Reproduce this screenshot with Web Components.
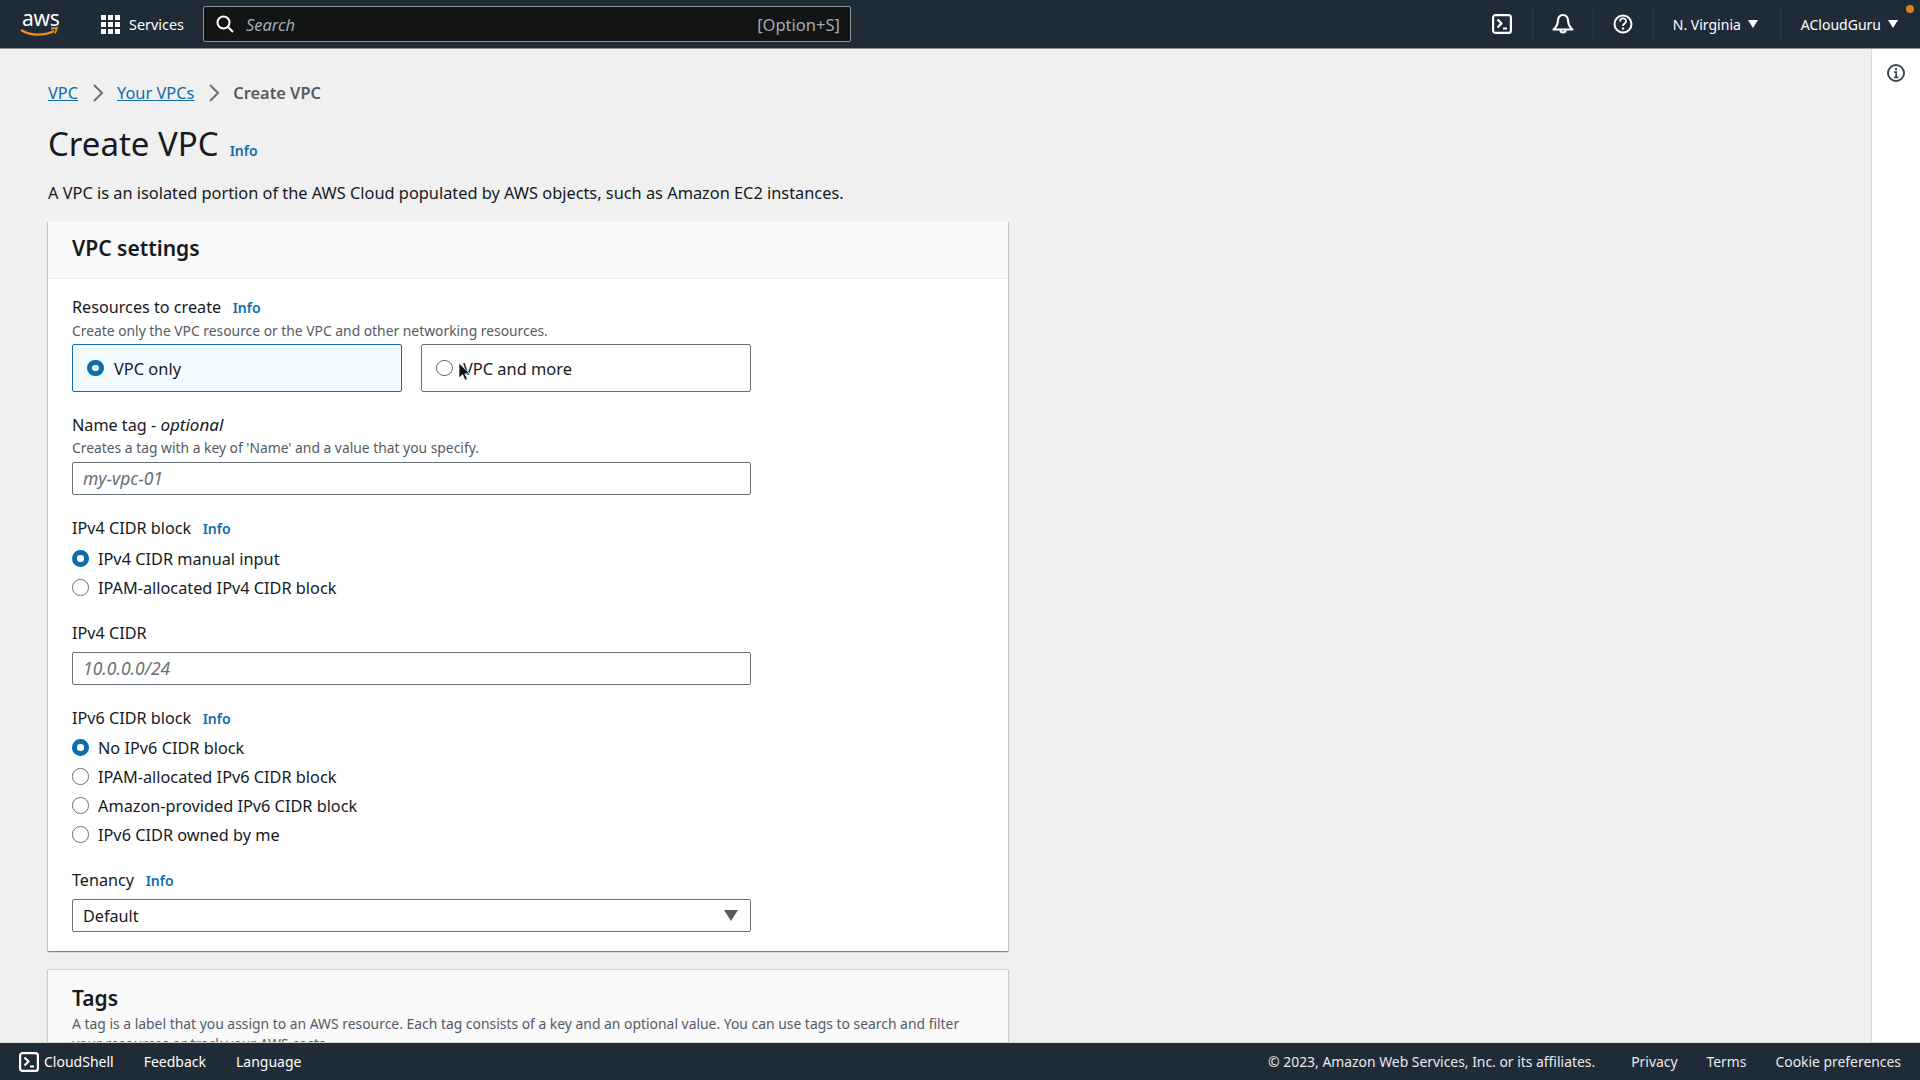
<!DOCTYPE html>
<html lang="en">
<head>
<meta charset="utf-8">
<title>Create VPC</title>
<style>
html, body { margin: 0; height: 100%; overflow: hidden; }
body { font-family: "Noto Sans", "Open Sans", sans-serif; color: #16191f; background: #eff0ef; }
</style>
</head>
<body>
<app-shell>
  <top-bar slot="top"></top-bar>
  <bread-crumbs>
    <a>VPC</a><a>Your VPCs</a><span>Create VPC</span>
  </bread-crumbs>
  <page-title>Create VPC</page-title>
  <form-card heading="VPC settings">
    <form-field label="Resources to create" info description="Create only the VPC resource or the VPC and other networking resources." gap="0" mb="22">
      <div style="display:flex;gap:19px">
        <radio-tile checked>VPC only</radio-tile>
        <radio-tile>VPC and more</radio-tile>
      </div>
    </form-field>
    <form-field label="Name tag" optional description="Creates a tag with a key of 'Name' and a value that you specify." gap="4" mb="22">
      <text-box placeholder="my-vpc-01"></text-box>
    </form-field>
    <form-field label="IPv4 CIDR block" info gap="4" mb="20">
      <radio-option checked>IPv4 CIDR manual input</radio-option>
      <radio-option>IPAM-allocated IPv4 CIDR block</radio-option>
    </form-field>
    <form-field label="IPv4 CIDR" gap="8" mb="22">
      <text-box placeholder="10.0.0.0/24"></text-box>
    </form-field>
    <form-field label="IPv6 CIDR block" info gap="3" mb="20">
      <radio-option checked>No IPv6 CIDR block</radio-option>
      <radio-option>IPAM-allocated IPv6 CIDR block</radio-option>
      <radio-option>Amazon-provided IPv6 CIDR block</radio-option>
      <radio-option>IPv6 CIDR owned by me</radio-option>
    </form-field>
    <form-field label="Tenancy" info gap="7" mb="0">
      <select-box>Default</select-box>
    </form-field>
  </form-card>
  <tags-card></tags-card>
  <bottom-bar slot="bottom"></bottom-bar>
</app-shell>

<script>
const ICON_SHELL = `<svg width="20" height="20" viewBox="0 0 20 20" fill="none" stroke="#fff" stroke-width="2.200"><rect x="1.100" y="1.100" width="17.800" height="17.800" rx="2.500"/><path d="M5.500 5.500l4 4-4 4M11 14.500h4" stroke-linejoin="round"/></svg>`;

class AppShell extends HTMLElement {
  constructor() {
    super();
    this.attachShadow({mode: "open"}).innerHTML = `
    <style>
      :host { display: flex; flex-direction: column; height: 100vh; }
      .middle { flex: 1; display: flex; min-height: 0; }
      .content { flex: 1; min-width: 0; overflow: hidden; padding: 32px 0 0 48px; box-sizing: border-box; }
      .side { width: 48px; background: #fff; border-left: 1px solid #d5dbdb; display: flex; justify-content: center; padding-top: 14px; box-sizing: content-box; }
      .cursor { position: absolute; left: 458px; top: 362px; }
    </style>
    <slot name="top"></slot>
    <div class="middle">
      <div class="content"><slot></slot></div>
      <div class="side">
        <svg width="20" height="20" viewBox="0 0 20 20" fill="none" stroke="#414750" stroke-width="2"><circle cx="10" cy="10" r="8"/><circle cx="10" cy="6" r="1.200" fill="#414750" stroke="none"/><path d="M8 9.200h2.200v5M8 14.400h4.400" stroke-width="1.700"/></svg>
      </div>
    </div>
    <slot name="bottom"></slot>
    <svg class="cursor" width="12" height="20" viewBox="0 0 12 20"><path d="M1 1v15l3.600-3.400 2.400 5.600 2.400-1-2.400-5.400h4.600z" fill="#111" stroke="#fff" stroke-width=".7"/></svg>`;
  }
}

class TopBar extends HTMLElement {
  constructor() {
    super();
    const grid = Array.from({length: 9}, () => `<i></i>`).join("");
    this.attachShadow({mode: "open"}).innerHTML = `
    <style>
      :host { display: flex; align-items: center; height: 48px; background: #202b38; border-bottom: 1px solid #8c939b; box-sizing: content-box; color: #fff; font-size: 14px; flex: none; }
      .logo { width: 40px; margin-left: 20px; position: relative; height: 34px; }
      .logo b { font-weight: 400; font-size: 21px; letter-spacing: -.3px; position: absolute; left: 2px; top: -3px; line-height: 28px; }
      .logo svg { position: absolute; left: 0; top: 20px; }
      .grid { display: grid; grid-template-columns: repeat(3, 5px); gap: 2px; margin-left: 41px; }
      .grid i { width: 5px; height: 5px; background: #fff; display: block; }
      .services { margin-left: 9px; font-size: 14.400px; }
      .search { margin-left: 19px; width: 648px; height: 36px; box-sizing: border-box; background: #121415; border: 1px solid #879596; border-radius: 2px; display: flex; align-items: center; padding: 0 10px; color: #a4abb3; font-size: 16.500px; }
      .search svg { margin-right: 12px; margin-left: 2px; }
      .search em { flex: 1; font-style: italic; }
      .right { margin-left: auto; display: flex; align-items: center; height: 100%; }
      .ico { width: 60px; display: flex; justify-content: center; align-items: center; height: 34px; border-right: 1px solid #2c3948; }
      .menu { display: flex; align-items: center; gap: 7px; font-size: 14px; height: 34px; }
      .tri { width: 0; height: 0; border-left: 5.500px solid transparent; border-right: 5.500px solid transparent; border-top: 8px solid #fff; }
      .dot { position: absolute; left: 1906px; top: 5px; width: 8px; height: 8px; border-radius: 50%; background: #e07f14; }
    </style>
    <div class="logo"><b>aws</b>
      <svg width="40" height="12" viewBox="0 0 40 12" fill="none"><path d="M1 3c9 6 23 6 33 1" stroke="#f08c1a" stroke-width="2.200"/><path d="M31 1.500l6-.5-2 5.500" stroke="#f08c1a" stroke-width="1.800"/></svg>
    </div>
    <div class="grid">${grid}</div>
    <span class="services">Services</span>
    <div class="search">
      <svg width="18" height="18" viewBox="0 0 18 18" fill="none" stroke="#fff" stroke-width="2"><circle cx="7.500" cy="7.500" r="6"/><path d="M12 12l5 5"/></svg>
      <em>Search</em><span>[Option+S]</span>
    </div>
    <div class="right">
      <div class="ico">${ICON_SHELL}</div>
      <div class="ico">
        <svg width="22" height="22" viewBox="0 0 22 22" fill="none" stroke="#fff" stroke-width="2.200" stroke-linejoin="round"><path d="M1.500 16.500c3-2.500 4-4.500 4.300-8C6 4.500 8 2 11 2s5 2.500 5.200 6.500c.3 3.500 1.300 5.500 4.300 8z"/><path d="M8.500 17a2.500 2.500 0 0 0 5 0"/></svg>
      </div>
      <div class="ico" style="width:59px">
        <svg width="20" height="20" viewBox="0 0 20 20" fill="none" stroke="#fff" stroke-width="2"><circle cx="10" cy="10" r="8.500"/><path d="M7 7.500c0-4 6-4 6-.3 0 2.300-3 2.300-3 4.800" stroke-width="1.800"/><circle cx="10" cy="14.500" r="1.200" fill="#fff" stroke="none"/></svg>
      </div>
      <div class="menu" style="padding:0 22px 0 19px;border-right:1px solid #2c3948">N. Virginia <span class="tri"></span></div>
      <div class="menu" style="padding:0 22px 0 20px">ACloudGuru <span class="tri"></span></div>
    </div>
    <div class="dot"></div>`;
  }
}

class BreadCrumbs extends HTMLElement {
  constructor() {
    super();
    this.attachShadow({mode: "open"}).innerHTML = `
    <style>
      :host { display: block; font-size: 16.350px; line-height: 24px; height: 24px; }
      .row { display: flex; align-items: center; gap: 13.500px; height: 24px; color: #545b64; font-weight: 600; }
      .row a { color: #0f6cad; text-decoration: underline; font-weight: 400; }
      .row svg { flex: none; }
    </style>
    <div class="row"></div>`;
    const row = this.shadowRoot.querySelector(".row");
    const sep = `<svg width="12" height="18" viewBox="0 0 12 18" fill="none" stroke="#687078" stroke-width="2"><path d="M2 1l8 8-8 8"/></svg>`;
    // copy the light children over, a separator between each
    row.innerHTML = Array.from(this.children).map(c =>
      c.tagName === "A" ? `<a>${c.textContent}</a>` : `<span>${c.textContent}</span>`
    ).join(sep);
  }
}

class PageTitle extends HTMLElement {
  constructor() {
    super();
    this.attachShadow({mode: "open"}).innerHTML = `
    <style>
      :host { display: block; }
      h1 { margin: 17px 0 0; font-size: 33px; font-weight: 400; line-height: 44px; display: flex; align-items: baseline; gap: 11px; color: #16191f; }
      h1 a { font-size: 14px; font-weight: 600; color: #0f6cad; }
      p { margin: 9px 0 17px; font-size: 16.350px; line-height: 22px; color: #16191f; }
    </style>
    <h1><slot></slot><a>Info</a></h1>
    <p>A VPC is an isolated portion of the AWS Cloud populated by AWS objects, such as Amazon EC2 instances.</p>`;
  }
}

class FormCard extends HTMLElement {
  constructor() {
    super();
    this.attachShadow({mode: "open"}).innerHTML = `
    <style>
      :host { display: block; width: 960px; background: #fff; box-shadow: 0 1px 1px 0 rgba(0,28,36,.3), 1px 1px 1px 0 rgba(0,28,36,.15), -1px 1px 1px 0 rgba(0,28,36,.15); margin-bottom: 19px; }
      h2 { margin: 0; background: #f8f9f8; height: 58px; box-sizing: border-box; padding: 13px 24px; font-size: 21px; line-height: 28px; font-weight: 600; border-bottom: 1px solid #eaeded; }
      .body { padding: 17px 24px 19px; }
    </style>
    <h2>${this.getAttribute("heading")}</h2>
    <div class="body"><slot></slot></div>`;
  }
}

class FormField extends HTMLElement {
  constructor() {
    super();
    const info = this.hasAttribute("info") ? `<a>Info</a>` : "";
    const opt = this.hasAttribute("optional") ? ` - <i>optional</i>` : "";
    const d = this.getAttribute("description");
    this.attachShadow({mode: "open"}).innerHTML = `
    <style>
      :host { display: block; margin-bottom: ${this.getAttribute("mb")}px; }
      .label { font-size: 16.200px; line-height: 22px; color: #16191f; display: flex; gap: 11.500px; align-items: baseline; }
      .label i { font-size: 17px; }
      .label a { font-size: 14px; font-weight: 600; color: #0f6cad; }
      .desc { font-size: 13.850px; line-height: 20px; color: #545b64; margin-top: 2px; margin-bottom: 3px; }
      .ctl { margin-top: ${this.getAttribute("gap")}px; }
    </style>
    <div class="label"><span>${this.getAttribute("label")}${opt}</span>${info}</div>
    ${d ? `<div class="desc">${d}</div>` : ""}
    <div class="ctl"><slot></slot></div>`;
  }
}

const RADIO_CSS = `
  .dot { width: 14.500px; height: 14.500px; border-radius: 50%; border: 1.500px solid #687078; background: #fff; flex: none; box-sizing: content-box; }
  .dot.on { border: 5.500px solid #0f6cad; width: 6.500px; height: 6.500px; }
`;

class RadioTile extends HTMLElement {
  constructor() {
    super();
    const on = this.hasAttribute("checked");
    this.attachShadow({mode: "open"}).innerHTML = `
    <style>
      :host { display: block; }
      ${RADIO_CSS}
      .tile { width: 330px; height: 48px; box-sizing: border-box; display: flex; align-items: center; gap: 10.500px; padding: 0 14px; font-size: 16.400px; border-radius: 2px;
        border: 1px solid ${on ? "#0f6cad" : "#687078"}; background: ${on ? "#f1faff" : "#fff"}; }
    </style>
    <div class="tile"><span class="dot ${on ? "on" : ""}"></span><slot></slot></div>`;
  }
}

class RadioOption extends HTMLElement {
  constructor() {
    super();
    const on = this.hasAttribute("checked");
    this.attachShadow({mode: "open"}).innerHTML = `
    <style>
      :host { display: flex; align-items: center; gap: 9.500px; height: 29px; font-size: 16.300px; }
      ${RADIO_CSS}
    </style>
    <span class="dot ${on ? "on" : ""}"></span><slot></slot>`;
  }
}

class TextBox extends HTMLElement {
  constructor() {
    super();
    this.attachShadow({mode: "open"}).innerHTML = `
    <style>
      :host { display: block; width: 679px; height: 33px; box-sizing: border-box; border: 1px solid #687078; border-radius: 2px; background: #fff; padding: 0 10px; font-size: 17.500px; line-height: 31px; font-style: italic; color: #687078; }
    </style>
    ${this.getAttribute("placeholder")}`;
  }
}

class SelectBox extends HTMLElement {
  constructor() {
    super();
    this.attachShadow({mode: "open"}).innerHTML = `
    <style>
      :host { display: flex; align-items: center; justify-content: space-between; width: 679px; height: 33px; box-sizing: border-box; border: 1px solid #687078; border-radius: 2px; background: #fff; padding: 0 12px 0 10px; font-size: 16.200px; }
      i { width: 0; height: 0; border-left: 7px solid transparent; border-right: 7px solid transparent; border-top: 11px solid #545b64; }
    </style>
    <slot></slot><i></i>`;
  }
}

class TagsCard extends HTMLElement {
  constructor() {
    super();
    this.attachShadow({mode: "open"}).innerHTML = `
    <style>
      :host { display: block; width: 960px; background: #f8f9f8; box-shadow: 0 -1px 1px 0 rgba(0,28,36,.08), 1px 0 1px 0 rgba(0,28,36,.15), -1px 0 1px 0 rgba(0,28,36,.15); padding: 13.500px 24px 20px; box-sizing: border-box; }
      h2 { margin: 0 0 2px; font-size: 21px; line-height: 28px; font-weight: 600; }
      p { margin: 0; font-size: 13.900px; line-height: 20px; color: #545b64; width: 900px; }
    </style>
    <h2>Tags</h2>
    <p>A tag is a label that you assign to an AWS resource. Each tag consists of a key and an optional value. You can use tags to search and filter your resources or track your AWS costs.</p>`;
  }
}

class BottomBar extends HTMLElement {
  constructor() {
    super();
    this.attachShadow({mode: "open"}).innerHTML = `
    <style>
      :host { display: flex; align-items: center; flex: none; height: 37px; background: #202b38; border-top: 1px solid #d5dbdb; box-sizing: content-box; color: #fff; font-size: 14px; padding: 0 19px; position: relative; }
      .cs { display: flex; align-items: center; gap: 5px; margin-right: 30px; }
      .lang { margin-left: 30px; }
      .r { margin-left: auto; display: flex; gap: 29px; color: #e8eaec; font-size: 13.900px; }
      .r span:first-child { margin-right: 7px; }
    </style>
    <div class="cs">${ICON_SHELL}<span>CloudShell</span></div>
    <span>Feedback</span><span class="lang">Language</span>
    <div class="r"><span>© 2023, Amazon Web Services, Inc. or its affiliates.</span><span>Privacy</span><span>Terms</span><span>Cookie preferences</span></div>`;
  }
}

customElements.define("app-shell", AppShell);
customElements.define("top-bar", TopBar);
customElements.define("bread-crumbs", BreadCrumbs);
customElements.define("page-title", PageTitle);
customElements.define("form-card", FormCard);
customElements.define("form-field", FormField);
customElements.define("radio-tile", RadioTile);
customElements.define("radio-option", RadioOption);
customElements.define("text-box", TextBox);
customElements.define("select-box", SelectBox);
customElements.define("tags-card", TagsCard);
customElements.define("bottom-bar", BottomBar);
</script>
</body>
</html>
